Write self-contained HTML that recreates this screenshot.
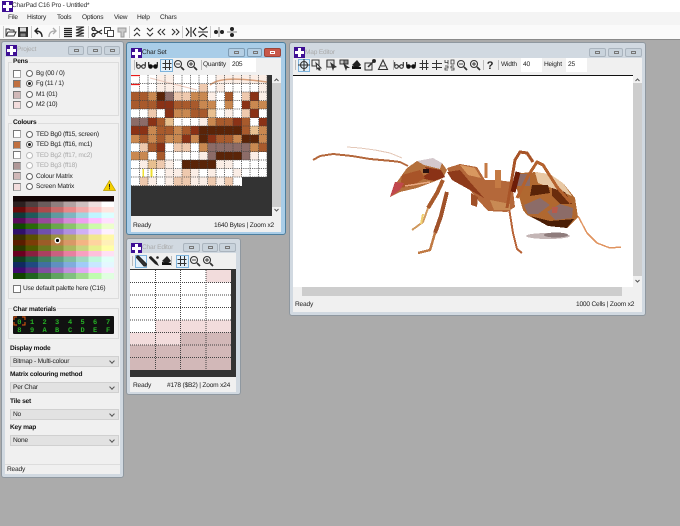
<!DOCTYPE html>
<html><head><meta charset="utf-8"><style>
html,body{margin:0;padding:0}
body{width:680px;height:526px;position:relative;overflow:hidden;background:#ababab;font-family:"Liberation Sans",sans-serif;font-size:6.6px;letter-spacing:-.2px;color:#222;text-rendering:geometricPrecision}
#root{position:absolute;left:0;top:0;width:680px;height:526px;overflow:hidden;filter:blur(.35px)}
.a,.t{position:absolute}
.t{white-space:nowrap;line-height:10px;height:10px}
.b{font-weight:bold;color:#111}
.g{color:#aaa}
.win{position:absolute;box-sizing:border-box;border:1px solid #8f98a0;border-radius:3px;background:#d1d9e1}
.act{background:#a9cde8;border-color:#4d7f9f}
.in{position:absolute;background:#f0f0f0}
.btn{position:absolute;box-sizing:border-box;height:9px;border:1px solid #aab4be;border-radius:2px;background:#c9d3dc}
.btn:after{content:"";position:absolute;left:5px;top:2px;width:5px;height:3px;border:1px solid #777;box-sizing:border-box}
.close{background:#c8584a;border-color:#9c4438}
.close:after{border-color:#fff}
.ico{position:absolute;width:11px;height:11px;background:#3e0f94}
.ico:before{content:"";position:absolute;left:4px;top:1px;width:3px;height:9px;background:#fff}
.ico:after{content:"";position:absolute;left:1px;top:4px;width:9px;height:3px;background:#fff}
.sw{position:absolute;left:13px;width:8px;height:8px;box-sizing:border-box;border:1px solid #aaa;border-top-color:#777;border-left-color:#777}
.r{position:absolute;left:26px;width:7px;height:7px;box-sizing:border-box;border:1px solid #666;border-radius:50%;background:#fff}
.r.on:after{content:"";position:absolute;left:1px;top:1px;width:3px;height:3px;border-radius:50%;background:#222}
.sel{position:absolute;left:10px;width:109px;height:11px;background:#e2e2e2;border:1px solid #d0d0d0;box-sizing:border-box}
.sel:after{content:"";position:absolute;right:4px;top:2px;width:3px;height:3px;border-right:1px solid #555;border-bottom:1px solid #555;transform:rotate(45deg)}
.sel span{position:absolute;left:2px;top:0;line-height:9px}
.grp{position:absolute;left:8px;width:111px;box-sizing:border-box;border:1px solid #dcdcdc}
.tb{position:absolute;box-sizing:border-box;border:1px solid #7db3dc;background:#e3f0fa}
.sb{position:absolute;background:#f0f0f0}
.th{position:absolute;background:#cdcdcd}
#cs{position:absolute;left:0;top:0;display:grid;grid-template-columns:repeat(16,8.5px);grid-auto-rows:8.5px}
#cs i{display:block}
.w{background:#fff}.p{background:#fbeee6}.q{background:#eec9ae}.o{background:#c98850}.n{background:#a85a2c}.d{background:#5a2408}.m{background:#8c6c68}.c{background:#e8c090}.e{background:#8a3216}.y{background:linear-gradient(90deg,#fff 30%,#f0e030 30%,#f0e030 50%,#fff 50%)}
</style></head><body><div id="root">
<svg width="0" height="0" style="position:absolute"><defs>
<g id="open" fill="none" stroke="#333"><path d="M1 10V3h3l1 1h4v2M1 10h8l2-4H3z"/></g>
<g id="save"><rect x="1" y="1" width="10" height="10" fill="#333"/><rect x="3" y="1.500" width="6" height="4" fill="#ddd"/><rect x="3.500" y="7.500" width="5" height="3" fill="#888"/></g>
<g id="undo" fill="none" stroke="#222" stroke-width="1.400"><path d="M9 11C9 7 7 5 3 5M5 2L2 5l3 3"/></g>
<g id="redo" fill="none" stroke="#aaa" stroke-width="1.300"><path d="M3 11C3 7 5 5 9 5M7 2l3 3-3 3"/></g>
<g id="list" stroke="#222" stroke-width="1.200"><path d="M2 2.500h8M2 4.500h8M2 6.500h8M2 8.500h8M2 10.500h8"/></g>
<g id="zig" fill="none" stroke="#222" stroke-width="1.100"><path d="M2 1h8L2 4h8L2 7h8L2 10h8"/></g>
<g id="cut" fill="none" stroke="#222" stroke-width="1.200"><circle cx="2.500" cy="3" r="1.500"/><circle cx="2.500" cy="9" r="1.500"/><path d="M4 4l7 4M4 8l7-4"/></g>
<g id="copy" fill="#fff" stroke="#444"><rect x="1.500" y="1.500" width="6" height="6"/><rect x="4.500" y="4.500" width="6" height="6"/></g>
<g id="paste" fill="#ccc" stroke="#999"><path d="M2 2h8v4H8v5H5V6H2z"/></g>
<g id="up" fill="none" stroke="#333" stroke-width="1.100"><path d="M3 5l3-3 3 3M3 10l3-3 3 3"/></g>
<g id="down" fill="none" stroke="#333" stroke-width="1.100"><path d="M3 2l3 3 3-3M3 7l3 3 3-3"/></g>
<g id="left" fill="none" stroke="#333" stroke-width="1.100"><path d="M5 3L2 6l3 3M9 3L6 6l3 3"/></g>
<g id="right" fill="none" stroke="#333" stroke-width="1.100"><path d="M3 3l3 3-3 3M7 3l3 3-3 3"/></g>
<g id="hmir" fill="none" stroke="#222" stroke-width="1.100"><path d="M6 1v10M1 2l3 4-3 4M11 2L8 6l3 4"/></g>
<g id="vmir" fill="none" stroke="#222" stroke-width="1.100"><path d="M1 6h10M2 1l4 3 4-3M2 11l4-3 4 3"/></g>
<g id="hc" fill="#222"><circle cx="3" cy="6" r="2"/><circle cx="9" cy="6" r="2"/><rect x="5.500" y="1" width="1" height="10" fill="#888"/></g>
<g id="vc" fill="#222"><circle cx="6" cy="3" r="2"/><circle cx="6" cy="9" r="2"/><rect x="1" y="5.500" width="10" height="1" fill="#888"/></g>
<g id="bd" fill="none" stroke="#222" stroke-width="1"><circle cx="3.500" cy="7.500" r="1.800"/><circle cx="8.500" cy="7.500" r="1.800"/><path d="M1.700 3v4M10.300 3v4M5.300 7h1.400"/></g>
<g id="bk" fill="#111" stroke="#111"><circle cx="3.500" cy="7.500" r="1.800"/><circle cx="8.500" cy="7.500" r="1.800"/><path d="M1.700 3v4M10.300 3v4M5.300 7h1.400" fill="none" stroke-width="1.100"/></g>
<g id="grid" stroke="#333" stroke-width="1"><path d="M4.500 1v10M8.500 1v10M1.500 4.500h9M1.500 8.500h9"/></g>
<g id="gr2" stroke="#333" stroke-width="1"><path d="M5.500 1v10M1 4.500h10M1 8.500h10"/></g>
<g id="zo" fill="none" stroke="#333" stroke-width="1.100"><circle cx="5" cy="5" r="3.500"/><path d="M8 8l3 3" stroke-width="1.700"/><path d="M3 5h4" stroke-width=".9"/></g>
<g id="zi" fill="none" stroke="#333" stroke-width="1.100"><circle cx="5" cy="5" r="3.500"/><path d="M8 8l3 3" stroke-width="1.700"/><path d="M3 5h4M5 3v4" stroke-width=".9"/></g>
<g id="pen" fill="#333" stroke="#222"><path d="M1 1l1.500 0 8 8-.5 2-2 0L.5 2.500z"/></g>
<g id="drop" fill="#222"><path d="M1 2l2-1 6 6 2 4-4-2-6-6z"/><circle cx="9.500" cy="2.500" r="1.300"/></g>
<g id="fill" fill="#222"><path d="M6 1l4 5-4 3-5-3z"/><path d="M1 7v3h9V8z" fill="#111"/></g>
<g id="sel" fill="none" stroke="#333" stroke-width="1.100"><circle cx="6" cy="6" r="3.500"/><path d="M6 0v12M0 6h12"/></g>
<g id="arw" fill="none" stroke="#333"><rect x="1" y="1" width="7" height="6"/><path d="M5 4l5 5-2 0 1 2-1 0-1-2-1 1z" fill="#fff"/></g>
<g id="m1" fill="#333"><rect x="1" y="1" width="7" height="7" fill="#ddd" stroke="#333"/><path d="M4 3l7 5-3 1-1 3z"/></g>
<g id="m2" fill="#333"><rect x="1" y="1" width="4" height="4" fill="#ccc" stroke="#333"/><rect x="5" y="1" width="4" height="4" fill="#888" stroke="#333"/><path d="M4 4l7 5-3 0-1 3z"/></g>
<g id="m3" fill="none" stroke="#333"><rect x="1" y="4" width="7" height="7" fill="#eee"/><path d="M4 8l6-6" stroke-width="1.500"/><circle cx="10" cy="2" r="1.500" fill="#222"/></g>
<g id="m4" fill="none" stroke="#333" stroke-width="1.100"><path d="M1.500 10.500L6 1l4.500 9.500zM4 7h4"/></g>
<g id="num" fill="none" stroke="#333" stroke-width=".8"><path d="M1 1v2.500h3M4 1v4.500M7 1h3v4H7zM1 7h3v2H1v2h3M7 7h3M7 7v2h3v2H7"/></g>
</defs></svg>

<!-- title / menu / toolbar -->
<div class="a" style="left:0;top:0;width:680px;height:12px;background:#fff"></div>
<div class="ico" style="left:2px;top:1px"></div>
<div class="t" style="left:12px;top:1px;color:#333">CharPad C16 Pro - Untitled*</div>
<div class="a" style="left:0;top:12px;width:680px;height:13px;background:#f4f4f4"></div>
<div class="t" style="left:8px;top:13px">File</div>
<div class="t" style="left:27px;top:13px">History</div>
<div class="t" style="left:57px;top:13px">Tools</div>
<div class="t" style="left:82px;top:13px">Options</div>
<div class="t" style="left:114px;top:13px">View</div>
<div class="t" style="left:137px;top:13px">Help</div>
<div class="t" style="left:160px;top:13px">Chars</div>
<div class="a" style="left:0;top:25px;width:680px;height:14px;background:#fafafa"></div>
<div class="a" style="left:0;top:39px;width:680px;height:1px;background:#8a8a8a"></div>
<svg class="a" style="left:0;top:25px" width="240" height="14">
<use href="#open" x="5" y="1"/><use href="#save" x="17" y="1"/><use href="#undo" x="33" y="1"/><use href="#redo" x="46" y="1"/><use href="#list" x="62" y="1"/><use href="#zig" x="74" y="1"/><use href="#cut" x="91" y="1"/><use href="#copy" x="103" y="1"/><use href="#paste" x="116" y="1"/><use href="#up" x="131" y="1"/><use href="#down" x="144" y="1"/><use href="#left" x="156" y="1"/><use href="#right" x="169" y="1"/><use href="#hmir" x="185" y="1"/><use href="#vmir" x="197" y="1"/><use href="#hc" x="213" y="1"/><use href="#vc" x="226" y="1"/>
<path d="M3.500 1v12M31.500 1v12M59.500 1v12M88.500 1v12M129.500 1v12M182.500 1v12M210.500 1v12" stroke="#ccc"/>
</svg>

<!-- PROJECT -->
<div class="win" style="left:1px;top:41px;width:123px;height:437px"></div>
<div class="ico" style="left:6px;top:45px"></div>
<div class="t g" style="left:17px;top:45px">Project</div>
<div class="btn" style="left:68px;top:46px;width:16px"></div><div class="btn" style="left:87px;top:46px;width:15px"></div><div class="btn" style="left:104px;top:46px;width:16px"></div>
<div class="in" style="left:5px;top:57px;width:115px;height:417px"></div>
<div class="grp" style="top:62px;height:54px"></div>
<div class="t b" style="left:12px;top:57px;background:#f0f0f0;padding:0 1px">Pens</div>
<div class="sw" style="top:70px;background:#fff"></div><div class="r" style="top:70px"></div><div class="t" style="left:36px;top:69px">Bg (00 / 0)</div>
<div class="sw" style="top:80px;background:#c07040"></div><div class="r on" style="top:80px"></div><div class="t" style="left:36px;top:79px">Fg (11 / 1)</div>
<div class="sw" style="top:91px;background:#d0b8b8"></div><div class="r" style="top:91px"></div><div class="t" style="left:36px;top:90px">M1 (01)</div>
<div class="sw" style="top:101px;background:#f2dcdc"></div><div class="r" style="top:101px"></div><div class="t" style="left:36px;top:100px">M2 (10)</div>
<div class="grp" style="top:123px;height:176px"></div>
<div class="t b" style="left:12px;top:118px;background:#f0f0f0;padding:0 1px">Colours</div>
<div class="sw" style="top:130px;background:#fff"></div><div class="r" style="top:131px"></div><div class="t" style="left:36px;top:130px">TED Bg0 (ff15, screen)</div>
<div class="sw" style="top:141px;background:#c07040"></div><div class="r on" style="top:141px"></div><div class="t" style="left:36px;top:140px">TED Bg1 (ff16, mc1)</div>
<div class="sw" style="top:151px;background:#fff"></div><div class="r" style="top:152px;border-color:#bbb"></div><div class="t g" style="left:36px;top:151px">TED Bg2 (ff17, mc2)</div>
<div class="sw" style="top:162px;background:#b09898"></div><div class="r" style="top:162px;border-color:#bbb"></div><div class="t g" style="left:36px;top:161px">TED Bg3 (ff18)</div>
<div class="sw" style="top:172px;background:#d0b8b8"></div><div class="r" style="top:173px"></div><div class="t" style="left:36px;top:172px">Colour Matrix</div>
<div class="sw" style="top:183px;background:#f2dcdc"></div><div class="r" style="top:183px"></div><div class="t" style="left:36px;top:182px">Screen Matrix</div>
<svg class="a" style="left:103px;top:180px" width="13" height="11"><path d="M6.500 .5L12.500 10.500H.5z" fill="#f5d000" stroke="#b89c00" stroke-width=".7"/><path d="M6.500 4v3.500M6.500 8.300v1" stroke="#222"/></svg>
<svg class="a" style="left:13px;top:196px" width="101" height="83" shape-rendering="crispEdges">
<rect width="101" height="6" fill="#120404"/>
<rect x="0" y="5.500" width="13" height="6" fill="#2c2020"/><rect x="12.600" y="5.500" width="13" height="6" fill="#4e4040"/><rect x="25.200" y="5.500" width="13" height="6" fill="#6b5c5c"/><rect x="37.900" y="5.500" width="13" height="6" fill="#8f7f7f"/><rect x="50.500" y="5.500" width="13" height="6" fill="#b3a2a2"/><rect x="63.100" y="5.500" width="13" height="6" fill="#cfbfbf"/><rect x="75.700" y="5.500" width="13" height="6" fill="#efdfdf"/><rect x="88.400" y="5.500" width="13" height="6" fill="#fff"/>
<rect x="0" y="11" width="13" height="6" fill="#6a0a0a"/><rect x="12.600" y="11" width="13" height="6" fill="#8b2a2a"/><rect x="25.200" y="11" width="13" height="6" fill="#ac4a4a"/><rect x="37.900" y="11" width="13" height="6" fill="#c96a6a"/><rect x="50.500" y="11" width="13" height="6" fill="#e88888"/><rect x="63.100" y="11" width="13" height="6" fill="#f3a8a8"/><rect x="75.700" y="11" width="13" height="6" fill="#ffc9c9"/><rect x="88.400" y="11" width="13" height="6" fill="#ffe6e0"/>
<rect x="0" y="16.500" width="13" height="6" fill="#0f3a3a"/><rect x="12.600" y="16.500" width="13" height="6" fill="#1f5a5a"/><rect x="25.200" y="16.500" width="13" height="6" fill="#3f7a7a"/><rect x="37.900" y="16.500" width="13" height="6" fill="#5f9aa0"/><rect x="50.500" y="16.500" width="13" height="6" fill="#7fb5c0"/><rect x="63.100" y="16.500" width="13" height="6" fill="#9fd5e0"/><rect x="75.700" y="16.500" width="13" height="6" fill="#bff5ff"/><rect x="88.400" y="16.500" width="13" height="6" fill="#dcffff"/>
<rect x="0" y="22" width="13" height="6" fill="#5a0a5a"/><rect x="12.600" y="22" width="13" height="6" fill="#7a2a7a"/><rect x="25.200" y="22" width="13" height="6" fill="#9a4a9a"/><rect x="37.900" y="22" width="13" height="6" fill="#b96ab9"/><rect x="50.500" y="22" width="13" height="6" fill="#d68ad6"/><rect x="63.100" y="22" width="13" height="6" fill="#f0a0f0"/><rect x="75.700" y="22" width="13" height="6" fill="#ffc0ff"/><rect x="88.400" y="22" width="13" height="6" fill="#ffe0ff"/>
<rect x="0" y="27.500" width="13" height="6" fill="#104a00"/><rect x="12.600" y="27.500" width="13" height="6" fill="#2a6a08"/><rect x="25.200" y="27.500" width="13" height="6" fill="#4a8a2a"/><rect x="37.900" y="27.500" width="13" height="6" fill="#6aa84a"/><rect x="50.500" y="27.500" width="13" height="6" fill="#8ac46a"/><rect x="63.100" y="27.500" width="13" height="6" fill="#aae28a"/><rect x="75.700" y="27.500" width="13" height="6" fill="#cdfcaa"/><rect x="88.400" y="27.500" width="13" height="6" fill="#ecffcc"/>
<rect x="0" y="33" width="13" height="6" fill="#30106a"/><rect x="12.600" y="33" width="13" height="6" fill="#50308a"/><rect x="25.200" y="33" width="13" height="6" fill="#7050aa"/><rect x="37.900" y="33" width="13" height="6" fill="#9070ca"/><rect x="50.500" y="33" width="13" height="6" fill="#b090e0"/><rect x="63.100" y="33" width="13" height="6" fill="#d0b0f5"/><rect x="75.700" y="33" width="13" height="6" fill="#ecd0ff"/><rect x="88.400" y="33" width="13" height="6" fill="#fdf0ff"/>
<rect x="0" y="38.500" width="13" height="6" fill="#3a3000"/><rect x="12.600" y="38.500" width="13" height="6" fill="#5a5000"/><rect x="25.200" y="38.500" width="13" height="6" fill="#7a7020"/><rect x="37.900" y="38.500" width="13" height="6" fill="#9a9040"/><rect x="50.500" y="38.500" width="13" height="6" fill="#b8ae60"/><rect x="63.100" y="38.500" width="13" height="6" fill="#d4ca80"/><rect x="75.700" y="38.500" width="13" height="6" fill="#f2e890"/><rect x="88.400" y="38.500" width="13" height="6" fill="#fff8a8"/>
<rect x="0" y="44" width="13" height="6" fill="#5a1c00"/><rect x="12.600" y="44" width="13" height="6" fill="#7c3c08"/><rect x="25.200" y="44" width="13" height="6" fill="#9c5c28"/><rect x="37.900" y="44" width="13" height="6" fill="#bc7c48"/><rect x="50.500" y="44" width="13" height="6" fill="#d89868"/><rect x="63.100" y="44" width="13" height="6" fill="#f4b484"/><rect x="75.700" y="44" width="13" height="6" fill="#ffd4a0"/><rect x="88.400" y="44" width="13" height="6" fill="#fff0b8"/>
<rect x="0" y="49.500" width="13" height="6" fill="#2a3800"/><rect x="12.600" y="49.500" width="13" height="6" fill="#4c5800"/><rect x="25.200" y="49.500" width="13" height="6" fill="#6c7820"/><rect x="37.900" y="49.500" width="13" height="6" fill="#8c9840"/><rect x="50.500" y="49.500" width="13" height="6" fill="#acb860"/><rect x="63.100" y="49.500" width="13" height="6" fill="#c8d480"/><rect x="75.700" y="49.500" width="13" height="6" fill="#e8f090"/><rect x="88.400" y="49.500" width="13" height="6" fill="#ffffa8"/>
<rect x="0" y="55" width="13" height="6" fill="#6a0020"/><rect x="12.600" y="55" width="13" height="6" fill="#8a2040"/><rect x="25.200" y="55" width="13" height="6" fill="#aa4060"/><rect x="37.900" y="55" width="13" height="6" fill="#ca6080"/><rect x="50.500" y="55" width="13" height="6" fill="#e880a0"/><rect x="63.100" y="55" width="13" height="6" fill="#f8a0c0"/><rect x="75.700" y="55" width="13" height="6" fill="#ffc0dc"/><rect x="88.400" y="55" width="13" height="6" fill="#ffe0f4"/>
<rect x="0" y="60.500" width="13" height="6" fill="#0f4020"/><rect x="12.600" y="60.500" width="13" height="6" fill="#206040"/><rect x="25.200" y="60.500" width="13" height="6" fill="#408060"/><rect x="37.900" y="60.500" width="13" height="6" fill="#60a080"/><rect x="50.500" y="60.500" width="13" height="6" fill="#80bca0"/><rect x="63.100" y="60.500" width="13" height="6" fill="#a0d8c0"/><rect x="75.700" y="60.500" width="13" height="6" fill="#c0f8dc"/><rect x="88.400" y="60.500" width="13" height="6" fill="#e0fff8"/>
<rect x="0" y="66" width="13" height="6" fill="#102a60"/><rect x="12.600" y="66" width="13" height="6" fill="#204a80"/><rect x="25.200" y="66" width="13" height="6" fill="#4070a0"/><rect x="37.900" y="66" width="13" height="6" fill="#6090c0"/><rect x="50.500" y="66" width="13" height="6" fill="#80acdc"/><rect x="63.100" y="66" width="13" height="6" fill="#a0ccf8"/><rect x="75.700" y="66" width="13" height="6" fill="#c8e8ff"/><rect x="88.400" y="66" width="13" height="6" fill="#e4f8ff"/>
<rect x="0" y="71.500" width="13" height="6" fill="#400a70"/><rect x="12.600" y="71.500" width="13" height="6" fill="#602a80"/><rect x="25.200" y="71.500" width="13" height="6" fill="#8050a0"/><rect x="37.900" y="71.500" width="13" height="6" fill="#a070c0"/><rect x="50.500" y="71.500" width="13" height="6" fill="#c090dc"/><rect x="63.100" y="71.500" width="13" height="6" fill="#e0a8f4"/><rect x="75.700" y="71.500" width="13" height="6" fill="#fcc8ff"/><rect x="88.400" y="71.500" width="13" height="6" fill="#fce8ff"/>
<rect x="0" y="77" width="13" height="6" fill="#104400"/><rect x="12.600" y="77" width="13" height="6" fill="#206420"/><rect x="25.200" y="77" width="13" height="6" fill="#408440"/><rect x="37.900" y="77" width="13" height="6" fill="#60a460"/><rect x="50.500" y="77" width="13" height="6" fill="#80c080"/><rect x="63.100" y="77" width="13" height="6" fill="#a0dc90"/><rect x="75.700" y="77" width="13" height="6" fill="#c0fcb0"/><rect x="88.400" y="77" width="13" height="6" fill="#e0ffe0"/>
<circle cx="44.500" cy="44.500" r="3" fill="#fff" shape-rendering="auto"/><circle cx="44.500" cy="44.500" r="1.600" fill="#000" shape-rendering="auto"/>
</svg>
<div class="a" style="left:13px;top:285px;width:6px;height:6px;border:1px solid #777;background:#fff"></div>
<div class="t" style="left:23px;top:284px">Use default palette here (C16)</div>
<div class="grp" style="top:308px;height:31px"></div>
<div class="t b" style="left:12px;top:305px;background:#f0f0f0;padding:0 1px">Char materials</div>
<div class="a" style="left:13px;top:316px;width:101px;height:18px;background:#111;border-radius:1px"></div>
<svg class="a" style="left:13px;top:316px" width="101" height="18" font-family="Liberation Mono,monospace" font-size="7" font-weight="bold" fill="#25b025" text-anchor="middle">
<text x="6.300" y="8">0</text><text x="19" y="8">1</text><text x="31.500" y="8">2</text><text x="44" y="8">3</text><text x="57" y="8">4</text><text x="69.500" y="8">5</text><text x="82" y="8">6</text><text x="95" y="8">7</text>
<text x="6.300" y="16">8</text><text x="19" y="16">9</text><text x="31.500" y="16">A</text><text x="44" y="16">B</text><text x="57" y="16">C</text><text x="69.500" y="16">D</text><text x="82" y="16">E</text><text x="95" y="16">F</text>
<path d="M1 4V1h3M9 1h3v3M1 6v3h3M12 6v3H9" fill="none" stroke="#e85a10"/>
</svg>
<div class="t b" style="left:10px;top:344px">Display mode</div>
<div class="sel" style="top:356px"><span>Bitmap - Multi-colour</span></div>
<div class="t b" style="left:10px;top:370px">Matrix colouring method</div>
<div class="sel" style="top:382px"><span>Per Char</span></div>
<div class="t b" style="left:10px;top:397px">Tile set</div>
<div class="sel" style="top:409px"><span>No</span></div>
<div class="t b" style="left:10px;top:423px">Key map</div>
<div class="sel" style="top:435px"><span>None</span></div>
<div class="a" style="left:5px;top:464px;width:115px;height:1px;background:#ddd"></div>
<div class="t" style="left:7px;top:465px">Ready</div>

<!-- CHAR SET -->
<div class="win act" style="left:126px;top:42px;width:160px;height:193px"></div>
<div class="ico" style="left:131px;top:48px"></div>
<div class="t" style="left:142px;top:48px">Char Set</div>
<div class="btn" style="left:228px;top:48px;width:17px;background:#b5cfe4;border-color:#7f9db5"></div><div class="btn" style="left:247px;top:48px;width:15px;background:#b5cfe4;border-color:#7f9db5"></div><div class="btn close" style="left:264px;top:48px;width:17px"></div>
<div class="in" style="left:131px;top:58px;width:150px;height:174px"></div>
<div class="tb" style="left:160px;top:59px;width:13px;height:13px"></div>
<svg class="a" style="left:131px;top:58px" width="80" height="14"><path d="M3.500 2v10" stroke="#bbb"/><use href="#bd" x="4" y="1"/><use href="#bk" x="16" y="1"/><use href="#grid" x="30" y="1"/><use href="#zo" x="42" y="1"/><use href="#zi" x="55" y="1"/><path d="M70.500 2v10" stroke="#bbb"/></svg>
<div class="t" style="left:203px;top:60px">Quantity</div>
<div class="a" style="left:230px;top:58px;width:26px;height:14px;background:#fff"></div>
<div class="t" style="left:232px;top:60px">205</div>
<div class="a" style="left:131px;top:75px;width:141px;height:141px;background:#333;overflow:hidden">
<div id="cs">
<i class="w"></i><i class="w"></i><i class="w"></i><i class="p"></i><i class="p"></i><i class="w"></i><i class="w"></i><i class="w"></i><i class="w"></i><i class="w"></i><i class="p"></i><i class="p"></i><i class="p"></i><i class="p"></i><i class="p"></i><i class="p"></i>
<i class="w"></i><i class="w"></i><i class="w"></i><i class="p"></i><i class="p"></i><i class="p"></i><i class="w"></i><i class="w"></i><i class="q"></i><i class="w"></i><i class="p"></i><i class="w"></i><i class="w"></i><i class="w"></i><i class="w"></i><i class="p"></i>
<i class="n"></i><i class="n"></i><i class="o"></i><i class="d"></i><i class="m"></i><i class="q"></i><i class="q"></i><i class="o"></i><i class="o"></i><i class="p"></i><i class="w"></i><i class="n"></i><i class="w"></i><i class="q"></i><i class="e"></i><i class="p"></i>
<i class="n"></i><i class="n"></i><i class="n"></i><i class="e"></i><i class="e"></i><i class="n"></i><i class="n"></i><i class="n"></i><i class="o"></i><i class="o"></i><i class="w"></i><i class="o"></i><i class="w"></i><i class="e"></i><i class="o"></i><i class="o"></i>
<i class="w"></i><i class="w"></i><i class="q"></i><i class="w"></i><i class="e"></i><i class="o"></i><i class="o"></i><i class="n"></i><i class="n"></i><i class="c"></i><i class="w"></i><i class="p"></i><i class="w"></i><i class="q"></i><i class="e"></i><i class="w"></i>
<i class="m"></i><i class="m"></i><i class="e"></i><i class="n"></i><i class="c"></i><i class="w"></i><i class="w"></i><i class="w"></i><i class="p"></i><i class="o"></i><i class="n"></i><i class="n"></i><i class="e"></i><i class="n"></i><i class="w"></i><i class="e"></i>
<i class="e"></i><i class="e"></i><i class="o"></i><i class="n"></i><i class="n"></i><i class="o"></i><i class="n"></i><i class="e"></i><i class="d"></i><i class="d"></i><i class="d"></i><i class="d"></i><i class="d"></i><i class="n"></i><i class="c"></i><i class="o"></i>
<i class="o"></i><i class="n"></i><i class="o"></i><i class="n"></i><i class="o"></i><i class="o"></i><i class="e"></i><i class="o"></i><i class="d"></i><i class="e"></i><i class="n"></i><i class="n"></i><i class="o"></i><i class="d"></i><i class="d"></i><i class="o"></i>
<i class="w"></i><i class="q"></i><i class="n"></i><i class="e"></i><i class="w"></i><i class="q"></i><i class="q"></i><i class="w"></i><i class="o"></i><i class="m"></i><i class="m"></i><i class="m"></i><i class="m"></i><i class="m"></i><i class="o"></i><i class="n"></i>
<i class="o"></i><i class="o"></i><i class="w"></i><i class="n"></i><i class="w"></i><i class="w"></i><i class="w"></i><i class="w"></i><i class="p"></i><i class="m"></i><i class="d"></i><i class="d"></i><i class="d"></i><i class="m"></i><i class="p"></i><i class="w"></i>
<i class="w"></i><i class="p"></i><i class="c"></i><i class="q"></i><i class="p"></i><i class="w"></i><i class="d"></i><i class="d"></i><i class="d"></i><i class="d"></i><i class="p"></i><i class="p"></i><i class="w"></i><i class="w"></i><i class="w"></i><i class="w"></i>
<i class="w"></i><i class="y"></i><i class="y"></i><i class="w"></i><i class="p"></i><i class="p"></i><i class="q"></i><i class="p"></i><i class="w"></i><i class="p"></i><i class="w"></i><i class="w"></i><i class="p"></i><i class="w"></i><i class="w"></i><i class="w"></i>
<i class="w"></i><i class="q"></i><i class="p"></i><i class="w"></i><i class="p"></i><i class="q"></i><i class="q"></i><i class="p"></i><i class="p"></i><i class="q"></i><i class="p"></i><i class="q"></i><i class="w"></i>
</div>
<svg class="a" style="left:0;top:0" width="141" height="111">
<path d="M79 10C86 4 100 2 136 7" stroke="#d9a07a" stroke-width="1.500" fill="none"/>
<path d="M19 3L66 15" stroke="#eccabc" fill="none"/>
<path d="M8.500 0V110M17 0V110M25.500 0V110M34 0V110M42.500 0V110M51 0V110M59.500 0V110M68 0V110M76.500 0V110M85 0V110M93.500 0V110M102 0V110M110.500 0V102M119 0V102M127.500 0V102M136 0V102M0 8.500H136M0 17H136M0 25.500H136M0 34H136M0 42.500H136M0 51H136M0 59.500H136M0 68H136M0 76.500H136M0 85H136M0 93.500H136M0 102H136M0 110.500H110" stroke="#444" stroke-width=".8" stroke-dasharray="1.200 1" fill="none"/>
<path d="M0 .5H9M0 9.500H9" stroke="#e81818" stroke-width="1.300"/>
</svg>
</div>
<div class="sb" style="left:272px;top:75px;width:9px;height:141px"></div>
<div class="th" style="left:272px;top:83px;width:9px;height:124px"></div>
<svg class="a" style="left:272px;top:75px" width="9" height="141" fill="none" stroke="#555"><path d="M2.500 6l2-2 2 2M2.500 134l2 2 2-2"/></svg>
<div class="t" style="left:133px;top:221px">Ready</div>
<div class="t" style="left:214px;top:221px">1640 Bytes | Zoom x2</div>

<!-- CHAR EDITOR -->
<div class="win" style="left:126px;top:238px;width:115px;height:157px"></div>
<div class="ico" style="left:131px;top:243px"></div>
<div class="t g" style="left:142px;top:243px">Char Editor</div>
<div class="btn" style="left:183px;top:243px;width:17px"></div><div class="btn" style="left:202px;top:243px;width:16px"></div><div class="btn" style="left:219px;top:243px;width:17px"></div>
<div class="in" style="left:130px;top:253px;width:106px;height:139px"></div>
<div class="tb" style="left:135px;top:255px;width:12px;height:13px"></div><div class="tb" style="left:176px;top:255px;width:13px;height:13px"></div>
<svg class="a" style="left:130px;top:254px" width="90" height="14"><path d="M2.500 2v10M41.500 2v10" stroke="#bbb"/><use href="#pen" x="6" y="1"/><use href="#drop" x="18" y="1"/><use href="#fill" x="31" y="1"/><use href="#grid" x="46" y="1"/><use href="#zo" x="59" y="1"/><use href="#zi" x="72" y="1"/></svg>
<svg class="a" style="left:130px;top:269px" width="106" height="108" shape-rendering="crispEdges">
<rect width="106" height="108" fill="#333"/><rect y="1" width="101" height="100" fill="#fff"/>
<rect x="76" y="1" width="25" height="12.500" fill="#f2dcdc"/>
<rect x="25.500" y="51" width="75.500" height="12.500" fill="#f2dcdc"/>
<rect x="0" y="63.500" width="50.500" height="12.500" fill="#f2dcdc"/>
<rect x="50.500" y="63.500" width="50.500" height="12.500" fill="#d2b8b8"/>
<rect x="0" y="76" width="101" height="25" fill="#d2b8b8"/>
<path d="M25.500 1V101M50.500 1V101M76 1V101M0 13.500H101M0 26H101M0 38.500H101M0 51H101M0 63.500H101M0 76H101M0 88.500H101" stroke="#444" stroke-dasharray="1 1" fill="none"/>
</svg>
<div class="t" style="left:133px;top:381px">Ready</div>
<div class="t" style="left:167px;top:381px">#178 ($B2) | Zoom x24</div>

<!-- MAP EDITOR -->
<div class="win" style="left:289px;top:42px;width:357px;height:274px"></div>
<div class="ico" style="left:294px;top:47px"></div>
<div class="t g" style="left:305px;top:48px">Map Editor</div>
<div class="btn" style="left:589px;top:48px;width:17px"></div><div class="btn" style="left:608px;top:48px;width:15px"></div><div class="btn" style="left:625px;top:48px;width:17px"></div>
<div class="in" style="left:293px;top:58px;width:349px;height:254px"></div>
<div class="tb" style="left:298px;top:59px;width:12px;height:13px"></div>
<svg class="a" style="left:293px;top:58px" width="206" height="14"><path d="M2.500 2v10M33.500 2v10M100.500 2v10M190.500 2v10" stroke="#bbb"/>
<use href="#sel" x="5" y="1"/><use href="#arw" x="18" y="1"/><use href="#m1" x="33" y="1"/><use href="#m2" x="46" y="1"/><use href="#fill" x="58" y="1"/><use href="#m3" x="71" y="1"/><use href="#m4" x="84" y="1"/><use href="#bd" x="100" y="1"/><use href="#bk" x="112" y="1"/><use href="#grid" x="125" y="1"/><use href="#gr2" x="138" y="1"/><use href="#num" x="151" y="1"/><use href="#zo" x="163" y="1"/><use href="#zi" x="176" y="1"/>
<text x="197" y="11" font-family="Liberation Sans,sans-serif" font-size="11" font-weight="bold" text-anchor="middle" fill="#222">?</text>
<path d="M205.500 2v10" stroke="#bbb"/></svg>
<div class="t" style="left:501px;top:60px">Width</div>
<div class="a" style="left:521px;top:58px;width:21px;height:14px;background:#fff"></div>
<div class="t" style="left:523px;top:60px">40</div>
<div class="t" style="left:544px;top:60px">Height</div>
<div class="a" style="left:566px;top:58px;width:21px;height:14px;background:#fff"></div>
<div class="t" style="left:568px;top:60px">25</div>
<div class="a" style="left:293px;top:75px;width:340px;height:212px;background:#fff;border-top:1px solid #111;box-sizing:border-box"></div>
<div class="sb" style="left:633px;top:75px;width:9px;height:212px"></div>
<div class="th" style="left:633px;top:83px;width:9px;height:193px"></div>
<svg class="a" style="left:633px;top:75px" width="9" height="212" fill="none" stroke="#555"><path d="M2.500 6l2-2 2 2M2.500 205l2 2 2-2"/></svg>
<div class="sb" style="left:293px;top:287px;width:340px;height:9px"></div>
<div class="th" style="left:302px;top:287px;width:320px;height:9px"></div>
<svg class="a" style="left:293px;top:75px" width="340" height="212" viewBox="293 75 340 212" shape-rendering="crispEdges" fill="none" stroke-linejoin="round">
<!-- shadow -->
<ellipse cx="548" cy="236" rx="22" ry="3" fill="#c4b6b6"/>
<ellipse cx="556" cy="235" rx="12" ry="2.500" fill="#8e7c7c"/>
<!-- antennae -->
<path d="M347 147L360 148 375 150 390 153 402 158" stroke="#e4c8b8" stroke-width="1"/>
<path d="M313 160L320 156 333 154 352 156 370 159 392 161 400 162 408 166" stroke="#b4683c" stroke-width="2"/>
<!-- back legs -->
<path d="M578 216L587 233 597 243 610 248 621 247" stroke="#e09460" stroke-width="1.500"/>
<path d="M509 208L513 233 517 249 522 253" stroke="#b86438" stroke-width="2"/>
<path d="M443 180L437 193 428 208" stroke="#a85a2c" stroke-width="4"/>
<path d="M428 208L423 222 412 230" stroke="#d09a60" stroke-width="2"/>
<path d="M423 214L421 224" stroke="#f0d070" stroke-width="2"/>
<path d="M447 192L441 216 435 233" stroke="#a0522a" stroke-width="4"/>
<path d="M435 233L430 250 418 253" stroke="#c07a44" stroke-width="2.500"/>
<!-- thorax -->
<path d="M447 168L460 164 477 167 485 180 497 180 512 182 515 207 507 212 488 211 478 200 470 190 452 180z" fill="#b4683a"/>
<path d="M447 172L460 170 470 182 484 198 470 190 452 180z" fill="#8e3a1a"/>
<path d="M460 165L475 168 481 178 468 175z" fill="#d89860"/>
<path d="M471 193L478 197 477 207 471 205z" fill="#a05028"/>
<path d="M486 163v15" stroke="#c47a44" stroke-width="3"/>
<path d="M498 170v18" stroke="#c47a44" stroke-width="6"/>
<path d="M490 200L510 204 510 210 494 210z" fill="#c88a54"/>
<!-- gaster -->
<path d="M523 210L515 183 520 173 537 172 563 183 575 198 578 217 567 228 547 225 527 215z" fill="#b06830"/>
<path d="M535 172L550 174 563 183 572 196 557 190 538 183z" fill="#e8c8a4"/>
<path d="M532 185L548 185 550 193 530 196z" fill="#5a2408"/>
<path d="M552 188L565 192 572 204 560 204 552 196z" fill="#6a2c0c"/>
<path d="M519 174L530 174 530 186 517 186z" fill="#8c6c68"/>
<path d="M524 205L540 198 550 205 538 214 528 214z" fill="#8c6c68"/>
<path d="M547 212L560 204 573 208 572 218 555 220z" fill="#8c6c68"/>
<path d="M530 216L550 221 574 219 567 228 548 226z" fill="#4a1e06"/>
<path d="M552 207L558 207 557 213 552 213z" fill="#b85a4a"/>
<!-- mid legs -->
<path d="M507 208L515 160 520 152 527 153 533 162" stroke="#a85428" stroke-width="3"/>
<path d="M517 198L528 176 537 162 543 165 557 187 571 203" stroke="#b4622e" stroke-width="3"/>
<path d="M513 192L518 172" stroke="#6e1e08" stroke-width="5"/>
<!-- head -->
<path d="M390 197L397 182 407 168 417 161 433 158 442 163 447 170 443 178 433 182 417 188 400 192z" fill="#b4703c"/>
<path d="M417 161L433 158 442 163 440 169 424 165z" fill="#d4c8cc"/>
<path d="M425 167L441 170 445 177 434 181 420 178 429 173z" fill="#8a3216"/>
<path d="M402 175L420 170 425 178 412 186 400 188z" fill="#a85428"/>
<path d="M390 197L395 182 404 183 400 190z" fill="#c0484c"/>
<rect x="423" y="169" width="6" height="4" fill="#2a1210"/>
<path d="M405 186L430 182" stroke="#e8a880" stroke-width="1.500"/>
</svg>
<div class="t" style="left:295px;top:300px">Ready</div>
<div class="t" style="left:576px;top:300px">1000 Cells | Zoom x2</div>
</div></body></html>
